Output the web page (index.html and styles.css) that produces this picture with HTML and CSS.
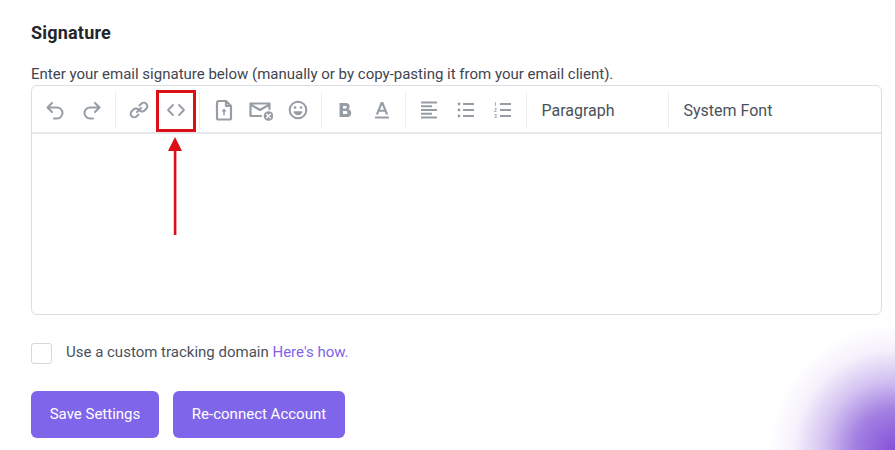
FILE: index.html
```html
<!DOCTYPE html>
<html lang="en">
<head>
<meta charset="utf-8">
<title>Signature</title>
<link rel="stylesheet" href="styles.css">
</head>
<body>
<div class="glow"></div>
<main class="page">
  <h2 class="title">Signature</h2>
  <p class="hint">Enter your email signature below (manually or by copy-pasting it from your email client).</p>
  <section class="editor">
    <div class="toolbar">
      <div class="group">
        <span class="tool"><svg viewBox="0 0 24 24" class="ico"><path d="M9 5 4.500 9.500 9 14M5 9.500h9a5 5 0 0 1 0 11h-3"/></svg></span>
        <span class="tool"><svg viewBox="0 0 24 24" class="ico"><path d="M15 5l4.500 4.500L15 14M19 9.500h-9a5 5 0 0 0 0 11h3"/></svg></span>
      </div>
      <div class="group">
        <span class="tool"><svg viewBox="0 0 24 24" class="ico"><path d="M10 14l4-4M12.500 7.500l1.800-1.800a3.500 3.500 0 0 1 5 5L17.500 12.500a3.500 3.500 0 0 1-5 0M11.500 11.500a3.500 3.500 0 0 0-5 0L4.700 13.300a3.500 3.500 0 0 0 5 5L11.500 16.500"/></svg></span>
        <span class="tool"><svg viewBox="0 0 24 24" class="ico thin"><path d="M9 7 4 12l5 5M15 7l5 5-5 5"/></svg></span>
      </div>
      <div class="group wide">
        <span class="tool"><svg viewBox="0 0 24 24" class="ico thick"><path d="M14 3H7a2 2 0 0 0-2 2v15a1.500 1.500 0 0 0 1.500 1.500h11A1.500 1.500 0 0 0 19 20V8zM14 3v5h5"/><path class="solid" d="M12 10.500 9.500 13.500h1.700v3.500h1.600v-3.500h1.700z"/></svg></span>
        <span class="tool"><svg viewBox="0 0 24 24" class="ico thick"><path d="M12 18H1.500V5.500h19V11M1.500 6.500 11 12l9.500-5.500"/><circle class="solid" cx="19.500" cy="18" r="4.800"/><path class="cross" d="M17.700 16.200l3.600 3.600M21.300 16.200l-3.600 3.600"/></svg></span>
        <span class="tool"><svg viewBox="0 0 24 24" class="ico"><circle cx="12" cy="12" r="8.300"/><path class="solid" d="M7.500 13.200h9c-.3 2.600-2.200 4-4.500 4s-4.200-1.400-4.500-4z"/><circle class="solid" cx="9" cy="9.500" r="1.300"/><circle class="solid" cx="15" cy="9.500" r="1.300"/></svg></span>
      </div>
      <div class="group">
        <span class="tool"><svg viewBox="0 0 24 24" class="ico"><path class="solid" fill-rule="evenodd" d="M6.500 5h6.500a3.800 3.800 0 0 1 2.800 6.400A4 4 0 0 1 13.500 19H6.500zM10 8v2.500h2.500a1.250 1.250 0 0 0 0-2.500zM10 13v3h3a1.500 1.500 0 0 0 0-3z"/></svg></span>
        <span class="tool"><svg viewBox="0 0 24 24" class="ico"><path class="solid" fill-rule="evenodd" d="M10.800 4h2.400l5 12.500h-2.400l-1-2.800H9.200l-1 2.800H5.800zM12 7l-2 4.800h4zM5 18.500h14V20.500H5z"/></svg></span>
      </div>
      <div class="group">
        <span class="tool"><svg viewBox="0 0 24 24" class="ico bars"><path d="M4 4.500h16M4 8.300h11M4 12h16M4 15.700h11M4 19.500h16"/></svg></span>
        <span class="tool"><svg viewBox="0 0 24 24" class="ico bars"><path d="M9 6h11M9 12h11M9 18h11"/><circle class="solid" cx="5" cy="6" r="1.400"/><circle class="solid" cx="5" cy="12" r="1.400"/><circle class="solid" cx="5" cy="18" r="1.400"/></svg></span>
        <span class="tool"><svg viewBox="0 0 24 24" class="ico bars"><path d="M9 6h11M9 12h11M9 18h11"/><path class="nums" d="M4.500 4v4M3.500 10.500h2l-2 3h2M3.500 16.500h2l-1 1.500 1 1.500h-2"/></svg></span>
      </div>
      <div class="select">Paragraph</div>
      <div class="select last">System Font</div>
    </div>
    <div class="body"></div>
  </section>
  <label class="check-row">
    <span class="box"></span>
    <span class="check-text">Use a custom tracking domain <a class="link">Here's how.</a></span>
  </label>
  <div class="actions">
    <button class="btn save">Save Settings</button>
    <button class="btn reconnect">Re-connect Account</button>
  </div>
</main>
<div class="mark"></div>
<svg class="arrow" viewBox="0 0 14 98"><path d="M7 0 14 14H0z"/><rect x="5.800" y="12" width="2.600" height="86"/></svg>
</body>
</html>
```
FILE: styles.css
```css
* { box-sizing: border-box; }
html, body { margin: 0; height: 450px; overflow: hidden; }
body { background: #fff; font-family: Roboto, "Liberation Sans", sans-serif; color: #3f4650; position: relative; }
.glow {
  position: absolute; left: 745px; top: 300px; width: 150px; height: 150px;
  background: radial-gradient(circle 126px at 150px 150px, #8450d8 0%, #a380e2 32%, #d3c2f1 56%, #f5f1fc 80%, #fff 100%);
}
.page { position: relative; padding: 23px 13px 0 31px; }
.title { margin: 0; font-size: 18px; line-height: 20px; font-weight: 700; letter-spacing: .2px; color: #22262c; }
.hint { margin: 21px 0 0; font-size: 15px; line-height: 20px; color: #3f4650; }
.editor { margin-top: 1px; height: 230px; border: 1px solid #dcdee2; border-radius: 6px; }
.toolbar { display: flex; align-items: center; height: 48px; padding-top: 2px; border-bottom: 2px solid #e6e7ea; }
.group { display: flex; gap: 13px; height: 36px; align-items: center; padding: 0 11px; border-right: 1px solid #eceef0; }
.group.wide { padding: 0 10.500px 0 12px; }
.tool { display: flex; width: 24px; height: 24px; }
.ico { width: 24px; height: 24px; fill: none; stroke: #979da5; stroke-width: 2; stroke-linecap: round; stroke-linejoin: round; }
.ico.thin { stroke-width: 1.800; }
.ico.thick { stroke-width: 2.200; }
.ico.bars { stroke-width: 2; stroke-linecap: butt; }
.ico .solid { fill: #979da5; stroke: none; }
.ico .cross { stroke: #fff; stroke-width: 1.500; }
.ico .nums { stroke-width: .8; }
.select { display: flex; align-items: center; height: 36px; width: 142px; padding-left: 15px; border-right: 1px solid #eceef0; font-size: 16px; color: #4a515a; }
.select.last { border-right: 0; width: 200px; }
.check-row { display: flex; align-items: flex-start; gap: 14px; margin-top: 28px; font-size: 15px; color: #4a515a; height: 21px; }
.check-text { line-height: 18px; }
.box { width: 21px; height: 21px; border: 1px solid #d5d7db; border-radius: 3px; background: #fff; }
.link { color: #8064e6; }
.actions { display: flex; gap: 14px; margin-top: 27px; }
.btn { height: 47px; border: 0; border-radius: 6px; background: #7f65ea; color: #fff; font: 400 15px Roboto, "Liberation Sans", sans-serif; padding: 0 0 1px; }
.save { width: 128px; }
.reconnect { width: 172px; }
.mark { position: absolute; left: 156px; top: 90px; width: 40px; height: 42px; border: 3px solid #db0f16; }
.arrow { position: absolute; left: 168px; top: 137px; width: 14px; height: 98px; fill: #db0f16; }
```
